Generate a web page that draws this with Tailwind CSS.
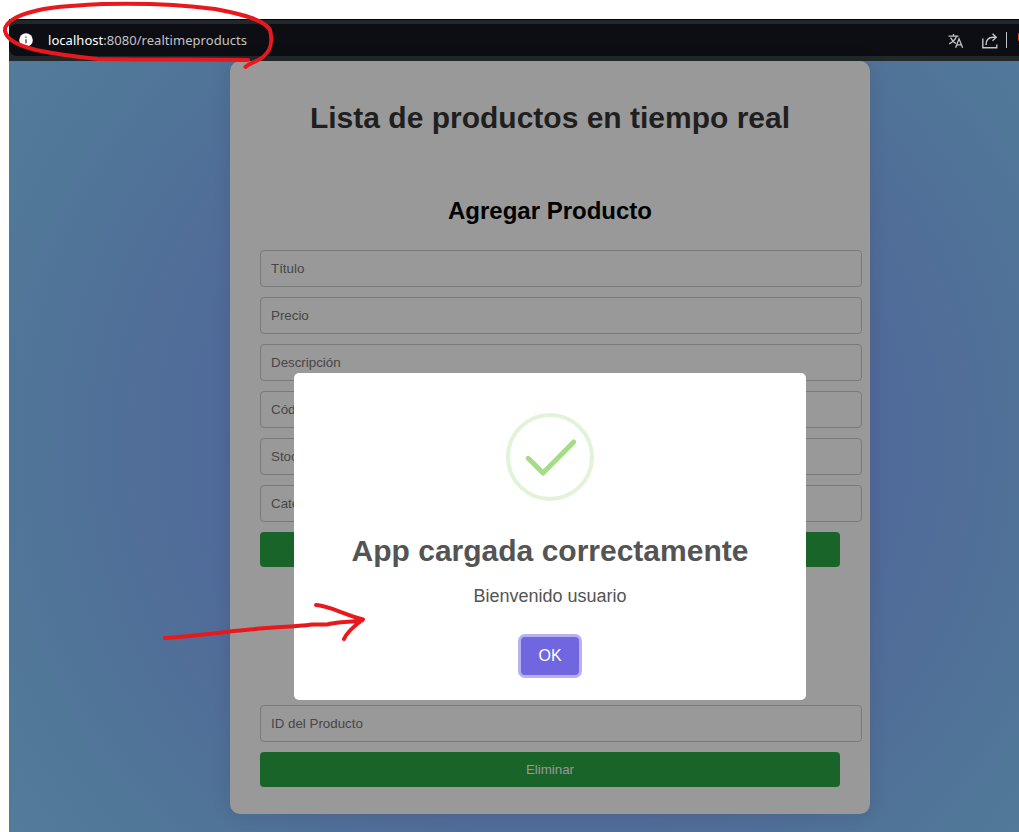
<!DOCTYPE html>
<html lang="es">
<head>
<meta charset="utf-8">
<title>Lista de productos en tiempo real</title>
<script src="https://cdn.jsdelivr.net/npm/@tailwindcss/browser@4"></script>
</head>
<body class="relative h-[832px] w-[1019px] overflow-hidden bg-white pl-[9px] pt-[19px] font-['Liberation_Sans',Arial,sans-serif]">
  <header class="h-[42px] border-t border-black bg-[#22272b] pt-1">
    <div class="flex h-8 items-center rounded-l-lg bg-[#0d0e13] pl-[10px] text-[#c3c4c6]">
      <svg class="size-[14px] shrink-0" viewBox="0 0 14 14"><circle cx="7" cy="7" r="6.8" fill="#fff"/><path d="M7 6.3v4M7 3.4v1.4" stroke="#4a4c50" stroke-width="1.4"/></svg>
      <div class="ml-[15px] flex-1 pt-[2px] font-['Noto_Sans',sans-serif] text-[13px] tracking-[0.04px]"><span class="text-white">localhost</span><span>:8080/realtimeproducts</span></div>
      <svg class="mr-[18px] mt-px size-4" viewBox="0 0 16 16" fill="none" stroke="currentColor" stroke-width="1.3"><path d="M.5 3.2h10M5.5 1v2.2M8.5 3.2C7.500 6.3 4.700 9 1.200 10.800M2.600 4.600C4 7.500 6 9.400 7.800 10.300M7.600 14.800l3.400-9 3.600 9M8.800 11.800h4.500"/></svg>
      <svg class="mr-[8px] mt-px size-4" viewBox="0 0 16 16" fill="none" stroke="currentColor" stroke-width="1.4"><path d="M.8 5.500v9.300h14V11.500M4 12c0-5 2.500-7.800 7-7.800h3M10.500.8l3.700 3.400-3.700 3.600"/></svg>
      <i class="h-4 w-px bg-[#c3c4c6]"></i>
      <i class="ml-[11px] h-2 w-px -translate-y-[3px] rounded-l bg-[#e65012]"></i>
    </div>
  </header>
  <main class="flex h-[771px] justify-center bg-[radial-gradient(circle_at_541px_385px,#50649a_200px,#506a9a_330px,#507098_450px,#507698_550px,#527c99_660px)] pl-[72px]">
    <section class="h-[753px] w-[640px] shrink-0 rounded-[10px] bg-[#999] px-[30px] pt-[38px] shadow-[0_0_20px_rgba(0,0,0,0.1)]">
      <h1 class="text-center text-[30px] leading-[37px] font-bold text-[#1f1f1f]">Lista de productos en tiempo real</h1>
      <h2 class="mt-[61px] text-center text-[24px] leading-7 font-bold text-black">Agregar Producto</h2>
      <form class="mt-[25px] flex w-[602px] flex-col gap-[10px] text-[13.333px] text-[#464646]">
        <div class="flex h-[37px] items-center rounded border border-[#7a7a7a] px-[10px]">Título</div>
        <div class="flex h-[37px] items-center rounded border border-[#7a7a7a] px-[10px]">Precio</div>
        <div class="flex h-[37px] items-center rounded border border-[#7a7a7a] px-[10px]">Descripción</div>
        <div class="flex h-[37px] items-center rounded border border-[#7a7a7a] px-[10px]">Código</div>
        <div class="flex h-[37px] items-center rounded border border-[#7a7a7a] px-[10px]">Stock</div>
        <div class="flex h-[37px] items-center rounded border border-[#7a7a7a] px-[10px]">Categoría</div>
        <div class="h-[35px] w-[580px] rounded bg-[#186429]"></div>
      </form>
      <form class="mt-[138px] flex w-[602px] flex-col gap-[10px] text-[13.333px] text-[#464646]">
        <div class="flex h-[37px] items-center rounded border border-[#7a7a7a] px-[10px]">ID del Producto</div>
        <div class="flex h-[35px] w-[580px] items-center justify-center rounded bg-[#186429] text-[#999]">Eliminar</div>
      </form>
    </section>
  </main>

  <div class="absolute left-[294px] top-[373px] flex h-[327px] w-[512px] flex-col items-center rounded-[5px] bg-white pt-10">
    <svg class="size-[88px]" viewBox="0 0 88 88" fill="none"><circle cx="44" cy="44" r="42" stroke="#e3f3da" stroke-width="4"/><path d="M22.200 45.300L37 60L67.700 29" stroke="#a5dc86" stroke-width="5" stroke-linecap="round" stroke-linejoin="round"/></svg>
    <h2 class="mt-[32px] text-[30px] leading-[35px] font-bold text-[#545454]">App cargada correctamente</h2>
    <p class="mt-[18px] text-[18px] leading-[21px] text-[#545454]">Bienvenido usuario</p>
    <button class="mt-[30px] h-[38px] w-[58px] rounded-[4px] bg-[#7066e0] text-base text-white shadow-[0_0_0_3px_#b7b2ef]">OK</button>
  </div>

  <svg class="absolute left-0 top-0 h-[832px] w-[1019px]" viewBox="0 0 1019 832" fill="none" stroke="#e8191c" stroke-width="4" stroke-linecap="round" stroke-linejoin="round">
    <path d="M248 60C215 59 165 60 98 59C78 57 58 54.500 36 50C17 45 7 40 5 31C4 22 18 15 35 11C57 5 75 6 102 4C140 3 185 5 215 9C242 14 265 20 270 30C273 42 271 50 263 57C257 62 251 62 245.500 67"/>
    <path d="M165 638C194 636 223 632 245 630C273 627 292 627 312 624.500H327C336 622 352 622 362 620.500M316 605C327 605 343 614 363 619.500C354 626 347 632 344 639"/>
  </svg>
</body>
</html>
